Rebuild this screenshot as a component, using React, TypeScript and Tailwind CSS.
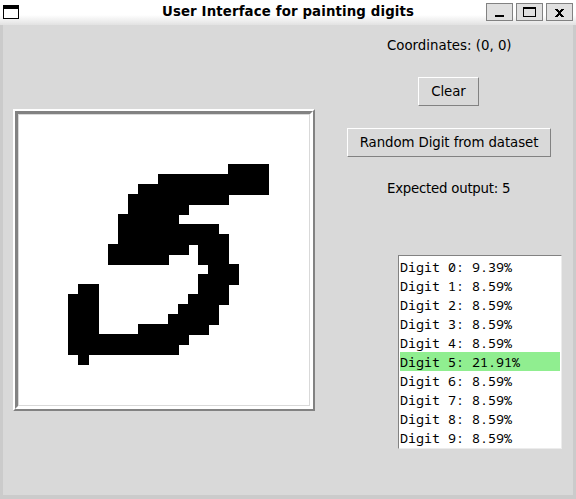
import type { ReactNode } from "react";

type Run = [row: number, first: number, last: number];

// Filled cells of the drawing grid, as horizontal runs.
const runs: Run[] = [
  [5, 21, 24], [6, 14, 24], [7, 12, 24], [8, 11, 20], [9, 11, 16], [10, 10, 15],
  [11, 10, 19], [12, 10, 20], [13, 9, 16], [13, 18, 20], [14, 9, 14], [14, 18, 20],
  [15, 19, 21], [16, 18, 21], [17, 6, 7], [17, 18, 20], [18, 5, 7], [18, 17, 20],
  [19, 5, 7], [19, 16, 19], [20, 5, 7], [20, 15, 19], [21, 5, 7], [21, 12, 18],
  [22, 5, 16], [23, 5, 15], [24, 6, 6],
];

const scores = ["9.39", "8.59", "8.59", "8.59", "8.59", "21.91", "8.59", "8.59", "8.59", "8.59"];
const expected = 5;

function WindowButton({ label, children }: { label: string; children: ReactNode }) {
  return (
    <button aria-label={label} className="h-[18px] w-[27px] border border-[#828282] bg-[#e0e0e0]">
      <svg width="25" height="16" viewBox="0 0 25 16" shapeRendering="crispEdges">{children}</svg>
    </button>
  );
}

function TitleBar() {
  return (
    <header className="grid h-[25px] shrink-0 grid-cols-[100px_1fr_100px] bg-linear-to-b from-white from-60% to-[#e2e2e2]">
      <svg className="mt-[5px] ml-[3px]" width="16" height="14" viewBox="0 0 16 14" shapeRendering="crispEdges">
        <path d="M0 0h16v14H0z" fill="#000" />
        <path d="M1 4h14v9H1z" fill="#fff" />
      </svg>
      <h1 className="text-center font-['DejaVu_Sans',sans-serif] text-[13.33px] leading-[23px] font-bold tracking-[0.13px] whitespace-nowrap">
        User Interface for painting digits
      </h1>
      <div className="mt-[3px] mr-[3px] flex justify-end gap-[3px]">
        <WindowButton label="Minimize"><path d="M8 11h9v2H8z" /></WindowButton>
        <WindowButton label="Maximize">
          <path d="M6 3h13v10H6zM7 5v7h11V5z" fillRule="evenodd" />
        </WindowButton>
        <WindowButton label="Close">
          <path d="M8 5h3v1h1v1h1v-1h1v-1h3v1h-1v1h-1v1h-1v2h1v1h1v1h1v1h-3v-1h-1v-1h-1v1h-1v1H8v-1h1v-1h1v-1h1V8h-1V7H9V6H8z" />
        </WindowButton>
      </div>
    </header>
  );
}

function TkButton({ className, children }: { className: string; children: ReactNode }) {
  return (
    <button className={`border border-t-white border-r-[#828282] border-b-[#828282] border-l-white leading-5 ${className}`}>
      {children}
    </button>
  );
}

export default function App() {
  return (
    <div className="flex h-[499px] w-[576px] flex-col overflow-hidden bg-[#cbcbcb] font-['DejaVu_Sans',sans-serif] text-[13.33px] text-black">
      <TitleBar />
      <main className="mx-[3px] flex h-[470px] bg-[#d9d9d9]">
        <div className="mt-[84px] ml-[10px] h-[302px] w-[302px] border-2 border-t-white border-r-[#828282] border-b-[#828282] border-l-white">
          <div className="h-[298px] w-[298px] border-[3px] border-t-[#828282] border-r-white border-b-white border-l-[#828282]">
            <div className="h-[292px] w-[292px] border border-[#d9d9d9] bg-white">
              <svg width="290" height="290" viewBox="19 115 290 290" shapeRendering="crispEdges">
                {runs.map(([row, first, last]) => (
                  <rect key={`${row}-${first}`} x={18 + first * 10} y={114 + row * 10} width={(last - first) * 10 + 11} height={11} />
                ))}
              </svg>
            </div>
          </div>
        </div>
        <section className="ml-[32px] flex w-[215px] flex-col">
          <p className="mt-[11px] ml-[40px] h-5 w-[130px] leading-5 whitespace-nowrap">Coordinates: (0, 0)</p>
          <TkButton className="mt-[21px] ml-[71px] h-[29px] w-[61px] tracking-[-0.06px]">Clear</TkButton>
          <TkButton className="mt-[22px] h-[29px] w-[204px] tracking-[-0.08px] whitespace-nowrap">Random Digit from dataset</TkButton>
          <p className="mt-[22px] ml-[40px] h-5 leading-5 tracking-[-0.24px] whitespace-nowrap">Expected output: 5</p>
          <ul className="mt-[56px] ml-[51px] h-[194px] w-[164px] border border-t-[#828282] border-r-[#ececec] border-b-[#ececec] border-l-[#828282] bg-white p-px font-['Noto_Sans_Mono','DejaVu_Sans_Mono',monospace] text-[13.33px] leading-[21px] tracking-normal">
            {scores.map((score, digit) => (
              <li key={digit} className={`h-[19px] ${digit === expected ? "bg-[#90ee90]" : ""}`}>
                Digit {digit}: {score}%
              </li>
            ))}
          </ul>
        </section>
      </main>
    </div>
  );
}
